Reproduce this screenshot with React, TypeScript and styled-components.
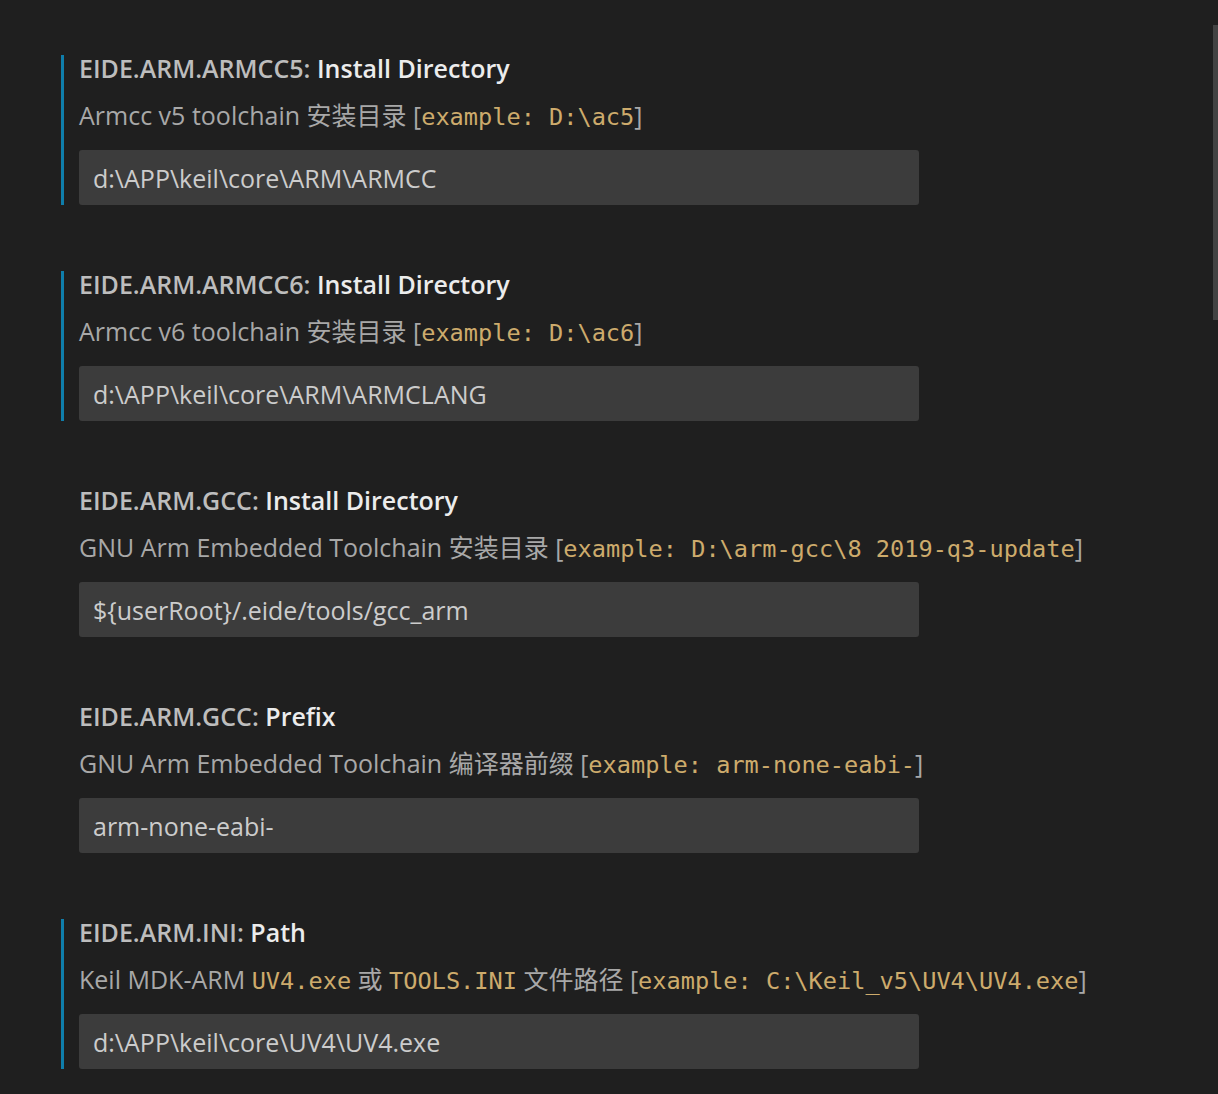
import React from "react";
import styled, { createGlobalStyle } from "styled-components";

const Global = createGlobalStyle`
  html, body { margin: 0; padding: 0; background: #1f1f1f; }
  body { font-family: "Open Sans", "Noto Sans CJK SC", sans-serif; }
`;

const Page = styled.div`
  position: relative;
  min-height: 1094px;
  background: #1f1f1f;
  padding: 55px 0 0 61px;
  box-sizing: border-box;
  overflow: hidden;
`;

const Scrollbar = styled.div`
  position: absolute;
  right: 0;
  top: 25px;
  width: 5px;
  height: 295px;
  background: #434343;
`;

const List = styled.div`
  display: flex;
  flex-direction: column;
  gap: 66px;
`;

const Item = styled.div<{ $modified: boolean }>`
  display: flex;
  flex-direction: column;
  border-left: 3px solid ${(p) => (p.$modified ? "#0f7eab" : "transparent")};
  padding-left: 15px;
`;

const Title = styled.div`
  height: 27px;
  font-size: 25px;
  line-height: 27px;
  font-weight: 600;
  color: #ececec;
  white-space: nowrap;
`;

const Category = styled.span`
  color: #bdbdbd;
`;

const Description = styled.div`
  margin-top: 18px;
  height: 30px;
  font-size: 25px;
  line-height: 30px;
  color: #a8a8a8;
  white-space: nowrap;
`;

const Code = styled.code`
  font-family: "DejaVu Sans Mono", "Liberation Mono", monospace;
  font-size: 23.6px;
  line-height: 1;
  color: #cdab6c;
`;

const Input = styled.div`
  margin-top: 20px;
  width: 840px;
  height: 55px;
  box-sizing: border-box;
  background: #3c3c3c;
  border-radius: 3px;
  padding: 0 14px;
  display: flex;
  align-items: center;
  font-size: 25px;
  color: #cccccc;
  white-space: nowrap;
`;

type Setting = {
  category: string;
  name: string;
  desc: React.ReactNode;
  value: string;
  modified: boolean;
};

const settings: Setting[] = [
  {
    category: "EIDE.ARM.ARMCC5: ",
    name: "Install Directory",
    desc: (
      <>
        Armcc v5 toolchain 安装目录 [<Code>example: D:\ac5</Code>]
      </>
    ),
    value: "d:\\APP\\keil\\core\\ARM\\ARMCC",
    modified: true,
  },
  {
    category: "EIDE.ARM.ARMCC6: ",
    name: "Install Directory",
    desc: (
      <>
        Armcc v6 toolchain 安装目录 [<Code>example: D:\ac6</Code>]
      </>
    ),
    value: "d:\\APP\\keil\\core\\ARM\\ARMCLANG",
    modified: true,
  },
  {
    category: "EIDE.ARM.GCC: ",
    name: "Install Directory",
    desc: (
      <>
        GNU Arm Embedded Toolchain 安装目录 [<Code>example: D:\arm-gcc\8 2019-q3-update</Code>]
      </>
    ),
    value: "${userRoot}/.eide/tools/gcc_arm",
    modified: false,
  },
  {
    category: "EIDE.ARM.GCC: ",
    name: "Prefix",
    desc: (
      <>
        GNU Arm Embedded Toolchain 编译器前缀 [<Code>example: arm-none-eabi-</Code>]
      </>
    ),
    value: "arm-none-eabi-",
    modified: false,
  },
  {
    category: "EIDE.ARM.INI: ",
    name: "Path",
    desc: (
      <>
        Keil MDK-ARM <Code>UV4.exe</Code> 或 <Code>TOOLS.INI</Code> 文件路径 [<Code>example: C:\Keil_v5\UV4\UV4.exe</Code>]
      </>
    ),
    value: "d:\\APP\\keil\\core\\UV4\\UV4.exe",
    modified: true,
  },
];

export default function App() {
  return (
    <>
      <Global />
      <Page>
        <List>
          {settings.map((s, i) => (
            <Item key={i} $modified={s.modified}>
              <Title>
                <Category>{s.category}</Category>
                {s.name}
              </Title>
              <Description>{s.desc}</Description>
              <Input>{s.value}</Input>
            </Item>
          ))}
        </List>
        <Scrollbar />
      </Page>
    </>
  );
}
